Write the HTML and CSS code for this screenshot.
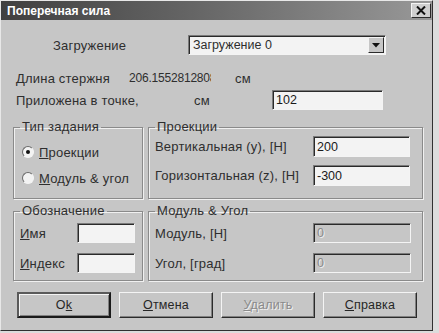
FILE: index.html
```html
<!DOCTYPE html>
<html lang="ru">
<head>
  <meta charset="UTF-8" />
  <title>Поперечная сила</title>
  <link rel="stylesheet" href="styles.css">
</head>
<body>
  <div class="dialog">
    <div class="titlebar">
      <span class="title">Поперечная сила</span>
      <span class="close-btn">
        <svg width="10" height="9" viewBox="0 0 10 9">
          <path d="M1 0.5 L9 8.5 M9 0.5 L1 8.5" stroke="#111" stroke-width="2" />
        </svg>
      </span>
    </div>

    <div class="row row-load">
      <span class="load-label">Загружение</span>
      <div class="combo">
        <span class="combo-text">Загружение 0</span>
        <span class="combo-arrow">
          <svg width="8" height="5" viewBox="0 0 8 5"><path d="M0 0 H8 L4 4.5 Z" fill="#111" /></svg>
        </span>
      </div>
    </div>

    <div class="row row-length">
      <span class="len-label">Длина стержня</span>
      <span class="len-value">206.155281280866</span>
      <span class="len-unit">см</span>
    </div>

    <div class="row row-point">
      <span class="point-label">Приложена в точке,</span>
      <span class="point-unit">см</span>
      <span class="field point-field">102</span>
    </div>

    <div class="groups">
      <fieldset class="group group-top">
        <legend>Тип задания</legend>
        <div class="radios">
          <label class="radio-row"><span class="radio checked"></span><span><u>П</u>роекции</span></label>
          <label class="radio-row"><span class="radio"></span><span><u>М</u>одуль &amp; угол</span></label>
        </div>
      </fieldset>

      <fieldset class="group group-top">
        <legend>Проекции</legend>
        <div class="form form-proj">
          <span>Вертикальная (у), [Н]</span>
          <span class="field">200</span>
          <span>Горизонтальная (z), [Н]</span>
          <span class="field">-300</span>
        </div>
      </fieldset>

      <fieldset class="group group-bottom">
        <legend>Обозначение</legend>
        <div class="form form-name">
          <span><u>И</u>мя</span>
          <span class="field"></span>
          <span><u>И</u>ндекс</span>
          <span class="field"></span>
        </div>
      </fieldset>

      <fieldset class="group group-bottom">
        <legend>Модуль &amp; Угол</legend>
        <div class="form form-mod">
          <span>Модуль, [Н]</span>
          <span class="field disabled">0</span>
          <span>Угол, [град]</span>
          <span class="field disabled">0</span>
        </div>
      </fieldset>
    </div>

    <div class="buttons">
      <button class="btn default">O<u>k</u></button>
      <button class="btn"><u>О</u>тмена</button>
      <button class="btn disabled"><u>У</u>далить</button>
      <button class="btn"><u>С</u>правка</button>
    </div>
  </div>
</body>
</html>
```

FILE: styles.css
```css
body {
  margin: 0;
  background: #dcdcdc;
  font-family: "Liberation Sans", Arial, sans-serif;
  font-size: 13px;
  letter-spacing: 0.2px;
  color: #2e2e2e;
}

.dialog {
  width: 433px;
  height: 331px;
  box-sizing: border-box;
  background: #c6c6c6;
  border: 1px solid;
  border-color: #e8e8e8 #303030 #303030 #e8e8e8;
  overflow: hidden;
}

.titlebar {
  height: 19px;
  display: flex;
  align-items: center;
  justify-content: space-between;
  padding: 0 1px 0 6px;
  background: linear-gradient(90deg, #404040 0%, #6a6a6a 50%, #989898 100%);
}

.title {
  color: #fff;
  font-weight: bold;
  font-size: 12px;
  letter-spacing: 0;
}

.close-btn {
  width: 20px;
  height: 15px;
  display: flex;
  justify-content: center;
  align-items: center;
  background: #cfcfcf;
  border: 1px solid;
  border-color: #f4f4f4 #2a2a2a #2a2a2a #f4f4f4;
  box-sizing: border-box;
}

.row {
  display: flex;
  align-items: center;
  height: 20px;
  white-space: nowrap;
}

.row-load {
  margin-top: 15px;
  padding-left: 52px;
}

.load-label {
  width: 135px;
}

.combo {
  width: 198px;
  height: 20px;
  box-sizing: border-box;
  display: flex;
  align-items: center;
  justify-content: space-between;
  background: #f3f3f3;
  border: 1px solid;
  border-color: #7a7a7a #f4f4f4 #f4f4f4 #7a7a7a;
  box-shadow: inset 1px 1px 0 #2a2a2a;
  padding: 0 1px 0 4px;
}

.combo-text {
  font-size: 12.5px;
  letter-spacing: 0;
}

.combo-arrow {
  width: 16px;
  height: 16px;
  box-sizing: border-box;
  display: flex;
  justify-content: center;
  align-items: center;
  background: #c6c6c6;
  border: 1px solid;
  border-color: #f4f4f4 #2a2a2a #2a2a2a #f4f4f4;
}

.row-length {
  margin-top: 13px;
  padding-left: 15px;
}

.len-label {
  width: 113px;
}

.len-value {
  width: 82px;
  overflow: hidden;
  font-size: 12px;
  letter-spacing: -0.2px;
}

.len-unit {
  margin-left: 24px;
}

.row-point {
  margin-top: 2px;
  padding-left: 15px;
}

.point-label {
  width: 178px;
}

.point-unit {
  width: 78px;
}

.point-field {
  width: 111px;
}

.field {
  height: 20px;
  box-sizing: border-box;
  display: flex;
  align-items: center;
  padding-left: 3px;
  font-size: 12.5px;
  letter-spacing: 0;
  background: #f3f3f3;
  border: 1px solid;
  border-color: #7a7a7a #f4f4f4 #f4f4f4 #7a7a7a;
  box-shadow: inset 1px 1px 0 #2a2a2a;
  color: #1a1a1a;
}

.field.disabled {
  background: #c6c6c6;
  color: #8a8a8a;
  text-shadow: 1px 1px 0 #f0f0f0;
}

.groups {
  margin-top: 10px;
  padding-left: 12px;
  display: grid;
  grid-template-columns: 130px 275px;
  column-gap: 5px;
  row-gap: 5px;
}

.group {
  margin: 0;
  padding: 0 6px;
  box-sizing: border-box;
  border: 1px solid #8a8a8a;
  box-shadow: 1px 1px 0 #f0f0f0, inset 1px 1px 0 #f0f0f0;
  min-width: 0;
}

.group-top {
  height: 79px;
}

.group-bottom {
  height: 77px;
}

.group legend {
  padding: 0 2px;
  line-height: 14px;
}

.radios {
  display: flex;
  flex-direction: column;
  gap: 6px;
  padding-top: 8px;
}

.radio-row {
  display: flex;
  align-items: center;
  gap: 5px;
  height: 20px;
  padding-left: 2px;
}

.radio {
  width: 12px;
  height: 12px;
  box-sizing: border-box;
  border-radius: 50%;
  border: 1px solid;
  border-color: #6a6a6a #f4f4f4 #f4f4f4 #6a6a6a;
  background: #f3f3f3;
  display: flex;
  justify-content: center;
  align-items: center;
}

.radio.checked::after {
  content: "";
  width: 4px;
  height: 4px;
  border-radius: 50%;
  background: #111;
}

.form {
  display: grid;
  align-items: center;
  white-space: nowrap;
}

.form-proj {
  grid-template-columns: 158px 97px;
  grid-template-rows: 21px 21px;
  row-gap: 8px;
  padding-top: 2px;
}

.form-proj .field {
  height: 21px;
}

.form-name {
  grid-template-columns: 57px 58px;
  grid-template-rows: 20px 20px;
  row-gap: 10px;
  padding-top: 5px;
}

.form-mod {
  grid-template-columns: 158px 98px;
  grid-template-rows: 20px 20px;
  row-gap: 10px;
  padding-top: 5px;
}

.buttons {
  display: flex;
  gap: 8px;
  margin-top: 11px;
  padding-left: 16px;
}

.btn {
  width: 94px;
  height: 26px;
  box-sizing: border-box;
  font-family: inherit;
  font-size: 12.5px;
  letter-spacing: 0.2px;
  color: #262626;
  background: #c6c6c6;
  border: 1px solid;
  border-color: #f4f4f4 #2a2a2a #2a2a2a #f4f4f4;
  box-shadow: inset -1px -1px 0 #808080;
  padding: 0;
}

.btn.default {
  border: 2px solid;
  border-color: #5a5a5a #1a1a1a #1a1a1a #5a5a5a;
  box-shadow: inset 1px 1px 0 #f4f4f4, inset -1px -1px 0 #808080;
}

.btn.disabled {
  color: #8a8a8a;
  text-shadow: 1px 1px 0 #f0f0f0;
}
```
